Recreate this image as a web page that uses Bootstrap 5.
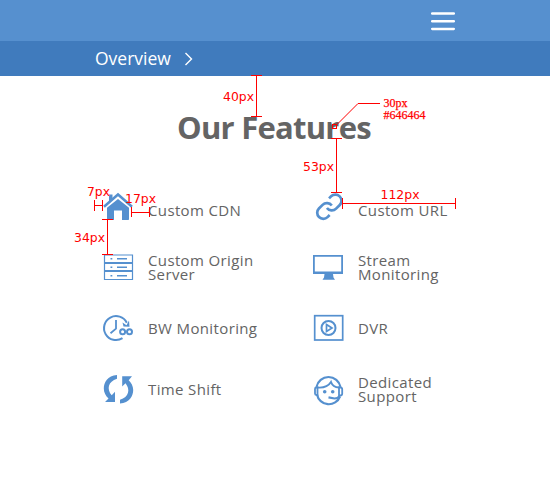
<!DOCTYPE html>
<html lang="en">
<head>
<meta charset="utf-8">
<meta name="viewport" content="width=device-width, initial-scale=1">
<title>Our Features</title>
<link href="https://cdn.jsdelivr.net/npm/bootstrap@5.3.0/dist/css/bootstrap.min.css" rel="stylesheet">
<style>
body{font-family:"Open Sans","Noto Sans",sans-serif;color:#646464;width:550px;height:480px;overflow:hidden}
.topbar{height:41px;background:#5690cf;padding-right:95px}
.crumbs{height:35px;background:#407bbd;padding-left:95px;font-size:17.5px;gap:13px}
.crumbs span{line-height:35px}
.title{font-size:31px;line-height:40px;font-weight:700;color:#646464;padding-top:31px;padding-right:2px;letter-spacing:-.75px}
.features{display:grid;grid-template-columns:210px 210px;grid-auto-rows:61px;padding:29px 0 0 103px}
.feature{gap:15px;font-size:15px;line-height:14px;letter-spacing:.37px}
.feature svg{width:30px;height:31px;flex:none;overflow:visible;fill:none;stroke:#5590cf;stroke-width:2}
.feature .solid{fill:#5590cf;stroke:none}
.feature span{padding-bottom:2px}
.feature .lower{padding:6px 0 0}
.notes{font-family:"DejaVu Sans",sans-serif;font-size:12.5px;fill:red}
.notes path{stroke:red;fill:none;shape-rendering:crispEdges}
.notes .diagonal{shape-rendering:auto}
.notes .fine{font-family:"Liberation Serif",serif;font-size:12px;stroke:red;stroke-width:.25px}
</style>
<script src="https://cdn.jsdelivr.net/npm/bootstrap@5.3.0/dist/js/bootstrap.bundle.min.js"></script>
</head>
<body class="bg-white position-relative">
<header>
  <nav class="topbar d-flex justify-content-end align-items-center">
    <svg width="24" height="20" viewBox="0 0 24 20" stroke="#fff" stroke-width="2.5" stroke-linecap="round"><path d="M1.2 2.5h21.6M1.2 10.2h21.6M1.2 17.9h21.6"/></svg>
  </nav>
  <div class="crumbs d-flex align-items-center text-white">
    <span>Overview</span>
    <svg width="9" height="14" viewBox="0 0 9 14" fill="none" stroke="#fff" stroke-width="1.4"><path d="M1.5 1l6 6-6 6"/></svg>
  </div>
</header>
<main>
  <h1 class="title text-center mb-0">Our Features</h1>
  <section class="features">
    <div class="feature d-flex align-items-center">
      <svg viewBox="0 0 30 31"><path class="solid" d="M6 3.5h3.500V8L6 11zM4 16.700L15 8l11 8.700v11.500q0 .8-.8.8H19v-9.500h-8V29H4.800q-.8 0-.8-.8z"/><path d="M1 15.700L15 3.500l14 12.200" stroke-width="2.500"/></svg>
      <span class="lower">Custom CDN</span>
    </div>
    <div class="feature d-flex align-items-center">
      <svg viewBox="0 0 30 31"><g transform="translate(1.700 1.100) scale(1.22)"><path stroke-width="2.200" d="M10 13a5 5 0 0 0 7.540.540l3-3a5 5 0 0 0-7.070-7.070l-1.720 1.710M14 11a5 5 0 0 0-7.540-.540l-3 3a5 5 0 0 0 7.070 7.070l1.710-1.710"/></g></svg>
      <span class="lower">Custom URL</span>
    </div>
    <div class="feature d-flex align-items-center">
      <svg viewBox="0 0 30 31"><path d="M1.500 3h28v7.500h-28zM1.500 11.500h28v7h-28zM1.500 19.500h28V27.500h-28z" stroke-width="1.200"/><path d="M7.500 6.700h1.800M14 6.700h10M7.500 15.300h1.800M14 15.300h10M7.500 23.700h1.800M14 23.700h10" stroke-width="1.600"/></svg>
      <span>Custom Origin<br>Server</span>
    </div>
    <div class="feature d-flex align-items-center">
      <svg viewBox="0 0 30 31"><path class="solid" fill-rule="evenodd" d="M0 3h30v19H20l.5 3.500 1.500 2.300H9.500l1.500-2.300.5-3.500H0zM1.800 4.800v14.700h26.400V4.800z"/></svg>
      <span>Stream<br>Monitoring</span>
    </div>
    <div class="feature d-flex align-items-center">
      <svg viewBox="0 0 30 31"><path d="M19.500 25.200A12 12 0 1 1 23.800 9.800" stroke-width="2"/><path class="solid" d="M19.500 9.500l4 2.800L26 7.500l.5 6.200-6-.2z"/><path d="M13 7v8.700l-5.500 4.600" stroke-width="1.800"/><circle cx="19.600" cy="18.800" r="2.500" stroke-width="2"/><circle cx="26.500" cy="18.800" r="2.500" stroke-width="2"/></svg>
      <span>BW Monitoring</span>
    </div>
    <div class="feature d-flex align-items-center">
      <svg viewBox="0 0 30 31"><rect x="1.700" y="2.700" width="28" height="24.300" stroke-width="1.700"/><circle cx="15.500" cy="15" r="7" stroke-width="2"/><path d="M13.500 11.500l5.500 3.500-5.500 3.500z" stroke-width="1.700"/></svg>
      <span>DVR</span>
    </div>
    <div class="feature d-flex align-items-center">
      <svg viewBox="0 0 30 31"><path class="solid" d="M14 1C4.500 1.500.8 8.500.8 14.500c0 4 2 7.500 4.700 10L2 28h10V17.700l-3.300 3.500C3.500 15 5 7.500 14 4.700zM17 29.500c9.500-.5 13.200-7.500 13.200-13.500 0-4-2-7.500-4.500-9.800L29 2.300H19.200v10.200l3.300-3.300C27.500 15.500 26 23 17 25.800z"/></svg>
      <span>Time Shift</span>
    </div>
    <div class="feature d-flex align-items-center">
      <svg viewBox="0 0 30 31"><path d="M3.500 13A12.200 12.200 0 0 1 27.500 13M4 20.500a12 12 0 0 0 23 2" stroke-width="2.200"/><path d="M4.500 13.500H3.500a1.500 1.500 0 0 0-1.500 1.500v4.500A1.500 1.500 0 0 0 3.500 21h1zM26 13.500h1.500a1.700 1.700 0 0 1 1.700 1.700v4.600a1.700 1.700 0 0 1-1.700 1.700H26z" stroke-width="1.800"/><path d="M4.500 13.500c6 .5 11-1.500 13.500-5.500 1.200 3.500 4 5.300 8 5.500" stroke-width="1.900"/><circle class="solid" cx="11.700" cy="17.700" r="1.800"/><circle class="solid" cx="19.700" cy="17.700" r="1.800"/><path d="M26.500 22q-1.500 2.500-5 2.500l-6-1.200" stroke-width="2.200"/></svg>
      <span>Dedicated<br>Support</span>
    </div>
  </section>
</main>
<svg class="notes position-absolute top-0 start-0" width="550" height="480" viewBox="0 0 550 480">
  <path d="M251 75.500h11M256.500 75v42M251 116.500h11"/>
  <path d="M331 138.500h11M336.500 138v54M331 192.500h11"/>
  <path d="M94.500 200v11M94 205.500h9M102.500 200v11"/>
  <path d="M131.500 207v10M131 212.500h19M149.500 207v10"/>
  <path d="M102 219.500h11M107.500 219v35M102 254.500h11"/>
  <path d="M342.500 198v11M342 203.500h114M455.500 198v11"/>
  <path d="M332.500 124.500h4v4h-4zM358 103.500h22"/>
  <path class="diagonal" d="M337 124.500L358 103.500"/>
  <text x="223" y="101" textLength="31" lengthAdjust="spacingAndGlyphs">40px</text>
  <text x="303" y="171" textLength="31" lengthAdjust="spacingAndGlyphs">53px</text>
  <text x="87" y="196" textLength="23" lengthAdjust="spacingAndGlyphs">7px</text>
  <text x="125" y="203" textLength="31" lengthAdjust="spacingAndGlyphs">17px</text>
  <text x="74" y="242" textLength="31" lengthAdjust="spacingAndGlyphs">34px</text>
  <text x="380.500" y="199" textLength="39" lengthAdjust="spacingAndGlyphs">112px</text>
  <text class="fine" x="383.500" y="107" textLength="24">30px</text>
  <text class="fine" x="383.500" y="119" textLength="42">#646464</text>
</svg>
</body>
</html>
